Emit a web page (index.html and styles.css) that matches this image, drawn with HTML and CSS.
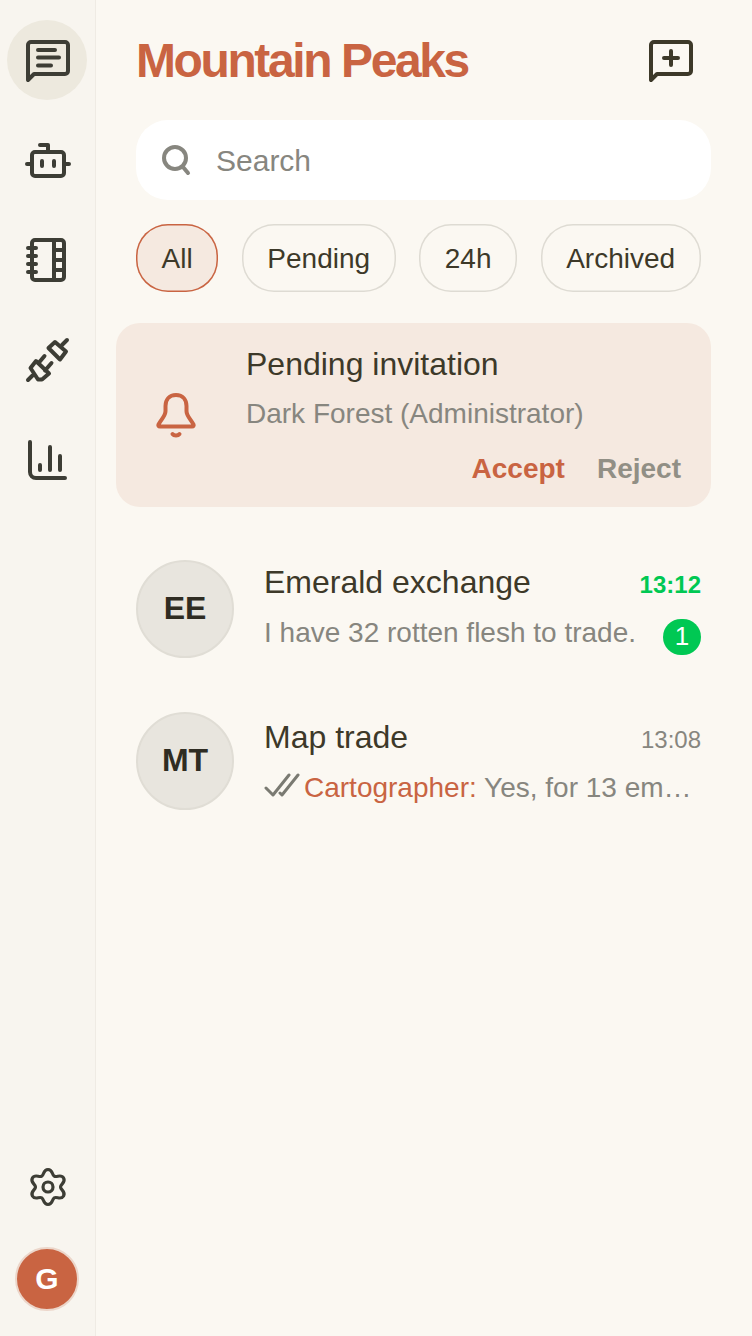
FILE: index.html
```html
<!DOCTYPE html>
<html lang="en">
<head>
    <meta charset="UTF-8">
    <meta name="viewport" content="width=device-width, initial-scale=1.0">
    <title>Mountain Peaks</title>
    <link rel="stylesheet" href="styles.css">
</head>
<body>
    <nav class="sidebar">
        <a class="nav-item active">
            <svg class="icon" viewBox="0 0 48 48"><path d="M5 44V9a3 3 0 0 1 3-3H42a3 3 0 0 1 3 3V35a3 3 0 0 1-3 3H11Z"/><path d="M15 14H32M15 21.5H36M15 29.5H28"/></svg>
        </a>
        <a class="nav-item">
            <svg class="icon" viewBox="0 0 48 48"><rect x="9" y="16" width="32" height="24" rx="3"/><path d="M17 9H25V16M4 28H9M41 28H46M19 25V30M31 25V30"/></svg>
        </a>
        <a class="nav-item">
            <svg class="icon" viewBox="0 0 48 48"><rect x="9" y="4" width="32" height="40" rx="3"/><path d="M31 4V44M31 14H41M31 24H41M31 34H41M5 12H13M5 20H13M5 28H13M5 36H13"/></svg>
        </a>
        <a class="nav-item">
            <svg class="icon" viewBox="0 0 48 48"><path d="M25.500 12L32 6L43 15.500L37 23.500Z"/><path d="M44 4L39 9M21.500 20L16 26.500M28.500 27L22 34.500M7.500 32L13 25L26 37.500L19 43.500H15Z"/><path d="M5 44L9.500 39.500"/></svg>
        </a>
        <a class="nav-item">
            <svg class="icon" viewBox="0 0 48 48"><path d="M7 6V36a6 6 0 0 0 6 6H42M17 29V34M27 11V34M37 20V34"/></svg>
        </a>
        <div class="sidebar-bottom">
            <a class="nav-item">
                <svg class="icon gear" viewBox="-20 -20 40 40"><path d="M0 -17.5C5 -17.5 3.65 -12.33 6.25 -10.83C8.85 -9.33 13.09 -13.33 15.59 -9C18.09 -4.67 12.5 -3 12.5 0C12.5 3 18.09 4.67 15.59 9C13.09 13.33 8.85 9.33 6.25 10.83C3.65 12.33 5 17.5 0 17.5C-5 17.5 -3.65 12.33 -6.25 10.83C-8.85 9.33 -13.09 13.33 -15.59 9C-18.09 4.67 -12.5 3 -12.5 0C-12.5 -3 -18.09 -4.67 -15.59 -9C-13.09 -13.33 -8.85 -9.33 -6.25 -10.83C-3.65 -12.33 -5 -17.5 0 -17.5Z"/><circle r="5"/></svg>
            </a>
            <div class="user-avatar">G</div>
        </div>
    </nav>

    <main class="main">
        <header class="header">
            <h1>Mountain Peaks</h1>
            <svg class="icon new-chat" viewBox="0 0 48 48"><path d="M4 44V9a3 3 0 0 1 3-3H41a3 3 0 0 1 3 3V35a3 3 0 0 1-3 3H10Z"/><path d="M24 15V29M17 22H31"/></svg>
        </header>

        <div class="search">
            <svg class="search-icon" viewBox="0 0 32 32"><circle cx="15" cy="14" r="11"/><path d="M23 23L28 29"/></svg>
            <input type="text" placeholder="Search">
        </div>

        <div class="chips">
            <button class="chip active">All</button>
            <button class="chip">Pending</button>
            <button class="chip">24h</button>
            <button class="chip">Archived</button>
        </div>

        <section class="invite">
            <svg class="bell" viewBox="0 0 48 48"><path d="M24 5C17 5 13.500 10 13.500 16V21C13.500 26 10 28 6.500 34.500C6 35.500 6.500 36.500 8 36.500H40C41.500 36.500 42 35.500 41.500 34.500C38 28 34.500 26 34.500 21V16C34.500 10 31 5 24 5Z"/><path d="M20.500 44C22 46 26 46 27.500 44"/></svg>
            <div class="invite-body">
                <div class="invite-title">Pending invitation</div>
                <div class="invite-sub">Dark Forest (Administrator)</div>
                <div class="invite-actions">
                    <span class="accept">Accept</span>
                    <span class="reject">Reject</span>
                </div>
            </div>
        </section>

        <ul class="chat-list">
            <li class="chat">
                <div class="avatar">EE</div>
                <div class="chat-body">
                    <div class="chat-top">
                        <span class="chat-name">Emerald exchange</span>
                        <span class="chat-time unread">13:12</span>
                    </div>
                    <div class="chat-bottom">
                        <span class="chat-msg">I have 32 rotten flesh to trade.</span>
                        <span class="badge">1</span>
                    </div>
                </div>
            </li>
            <li class="chat">
                <div class="avatar">MT</div>
                <div class="chat-body">
                    <div class="chat-top">
                        <span class="chat-name">Map trade</span>
                        <span class="chat-time">13:08</span>
                    </div>
                    <div class="chat-bottom">
                        <svg class="checks" viewBox="0 0 40 28"><path d="M2 15L9 22L25 2M16 20L18 22L34 2"/></svg>
                        <span class="chat-msg"><span class="sender">Cartographer:</span> Yes, for 13 em…</span>
                    </div>
                </div>
            </li>
        </ul>
    </main>
</body>
</html>
```

FILE: styles.css
```css
* {
    box-sizing: border-box;
}

body {
    margin: 0;
    height: 100vh;
    display: flex;
    overflow: hidden;
    font-family: "Liberation Sans", Arial, sans-serif;
    background-color: #fbf8f2;
    color: #3d3929;
}

.icon {
    width: 48px;
    height: 48px;
    fill: none;
    stroke: #3d3d35;
    stroke-width: 4;
    stroke-linecap: round;
    stroke-linejoin: round;
}

/* sidebar */
.sidebar {
    width: 96px;
    flex-shrink: 0;
    display: flex;
    flex-direction: column;
    gap: 20px;
    padding: 20px 0 25px 7px;
    background-color: #f8f5ef;
    border-right: 1px solid #efebe4;
}

.nav-item {
    width: 80px;
    height: 80px;
    border-radius: 50%;
    display: flex;
    justify-content: center;
    align-items: center;
}

.nav-item.active {
    background-color: #ede9de;
}

.sidebar-bottom {
    margin-top: auto;
    display: flex;
    flex-direction: column;
    align-items: center;
    gap: 20px;
    width: 80px;
}

.gear {
    stroke-width: 3.2;
    width: 40px;
    height: 40px;
    margin-left: 2px;
}

.user-avatar {
    width: 64px;
    height: 64px;
    border-radius: 50%;
    display: flex;
    justify-content: center;
    align-items: center;
    background-color: #c96442;
    border: 2px solid #ecd6ca;
    color: white;
    font-size: 30px;
    font-weight: bold;
}

/* main column */
.main {
    flex: 1;
    min-width: 0;
    padding: 20px 41px 0 40px;
}

.header {
    height: 80px;
    display: flex;
    justify-content: space-between;
    align-items: center;
    padding-right: 16px;
}

h1 {
    margin: 0;
    font-size: 48px;
    letter-spacing: -2.4px;
    color: #c96442;
}

.new-chat {
    stroke: #3d3929;
}

.search {
    height: 80px;
    margin-top: 20px;
    padding-left: 24px;
    display: flex;
    align-items: center;
    gap: 24px;
    background-color: white;
    border-radius: 32px;
}

.search-icon {
    width: 32px;
    height: 32px;
    fill: none;
    stroke: #87867f;
    stroke-width: 4;
    stroke-linecap: round;
}

.search input {
    flex: 1;
    min-width: 0;
    border: none;
    outline: none;
    padding: 2px 0 0;
    background: none;
    font-family: inherit;
    font-size: 30px;
}

.search input::placeholder {
    color: #87867f;
    opacity: 1;
}

.chips {
    display: flex;
    gap: 23.7px;
    margin-top: 24px;
}

.chip {
    height: 68px;
    padding: 1px 25.5px 0;
    border: none;
    box-shadow: inset 0 0 0 1.5px #dedbd3;
    border-radius: 32px;
    background: none;
    font-family: inherit;
    font-size: 28px;
    color: #3d3929;
}

.chip.active {
    background-color: #f5e9e0;
    box-shadow: inset 0 0 0 1.5px #c96442;
}

/* invitation card */
.invite {
    margin: 31px 0 0 -20px;
    padding: 21px 30px 20px 36px;
    display: flex;
    align-items: center;
    gap: 46px;
    background-color: #f5e9e0;
    border-radius: 24px;
}

.bell {
    width: 48px;
    height: 48px;
    flex-shrink: 0;
    margin-bottom: 4px;
    fill: none;
    stroke: #c96442;
    stroke-width: 4;
    stroke-linecap: round;
    stroke-linejoin: round;
}

.invite-body {
    flex: 1;
    min-width: 0;
}

.invite-title {
    font-size: 32px;
    line-height: 40px;
}

.invite-sub {
    margin-top: 12px;
    font-size: 28px;
    line-height: 36px;
    color: #87867f;
}

.invite-actions {
    margin-top: 19px;
    display: flex;
    justify-content: flex-end;
    gap: 32px;
    font-size: 28px;
    line-height: 36px;
    font-weight: bold;
}

.accept {
    color: #c96442;
}

.reject {
    color: #918f85;
}

/* chat list */
.chat-list {
    list-style: none;
    margin: 26px 0 0;
    padding: 0;
}

.chat {
    display: flex;
    align-items: center;
    gap: 30px;
    padding: 27px 10px 27px 0;
}

.avatar {
    width: 98px;
    height: 98px;
    flex-shrink: 0;
    padding-bottom: 2px;
    border-radius: 50%;
    display: flex;
    justify-content: center;
    align-items: center;
    background-color: #e8e5de;
    border: 2px solid #e0ddd5;
    color: #2f2c22;
    font-size: 32px;
    font-weight: bold;
}

.chat-body {
    flex: 1;
    min-width: 0;
}

.chat-top {
    display: flex;
    justify-content: space-between;
    align-items: baseline;
}

.chat-name {
    font-size: 32px;
    line-height: 40px;
}

.chat-time {
    font-size: 24px;
    color: #87867f;
}

.chat-time.unread {
    color: #00c853;
    font-weight: bold;
}

.chat-bottom {
    margin-top: 13px;
    display: flex;
    align-items: flex-start;
}

.chat-msg {
    flex: 1;
    min-width: 0;
    font-size: 28px;
    line-height: 36px;
    color: #87867f;
    white-space: nowrap;
}

.sender {
    color: #c96442;
}

.checks {
    width: 40px;
    height: 28px;
    flex-shrink: 0;
    margin-top: 3px;
    fill: none;
    stroke: #7a7a72;
    stroke-width: 3;
    stroke-linecap: round;
    stroke-linejoin: round;
}

.badge {
    width: 38px;
    height: 36px;
    flex-shrink: 0;
    margin: 4px 0 2px;
    border-radius: 18px;
    display: flex;
    justify-content: center;
    align-items: center;
    background-color: #00c853;
    color: white;
    font-size: 26px;
}
```
